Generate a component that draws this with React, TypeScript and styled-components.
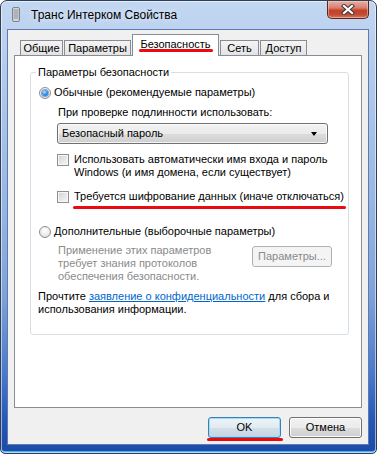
import React from 'react'
import styled, { createGlobalStyle, css } from 'styled-components'

const GlobalStyle = createGlobalStyle`
  html, body {
    margin: 0;
    padding: 0;
    background: #fff;
  }
  body {
    font-family: 'Liberation Sans', Arial, sans-serif;
    font-size: 11px;
    line-height: 13px;
    color: #000;
  }
  * {
    box-sizing: border-box;
  }
`

const Window = styled.div`
  width: 377px;
  height: 454px;
  display: flex;
  flex-direction: column;
  border: 1px solid #2f3f58;
  border-radius: 7px 7px 5px 5px;
  overflow: hidden;
  background: linear-gradient(
    to bottom,
    #c2d7f1 0%,
    #afc8ea 20%,
    #97b6e2 45%,
    #7fa3d9 65%,
    #4c7acb 82%,
    #2457b6 93%,
    #1d4aa6 100%
  );
  box-shadow: inset 0 0 0 1px rgba(255, 255, 255, 0.55), inset 0 -2px 0 #46b3f3;
`

const TitleBar = styled.div`
  height: 28px;
  display: flex;
  align-items: flex-start;
  padding-left: 11px;
  flex: none;
`

const TitleIcon = styled.svg`
  margin-top: 6px;
  flex: none;
`

const Title = styled.div`
  margin: 6px 0 0 11px;
  font-size: 12px;
  line-height: 16px;
  color: #000;
  text-shadow: 0 0 6px rgba(255, 255, 255, 0.9);
`

const CloseButton = styled.div`
  margin-left: auto;
  margin-right: 7px;
  width: 42px;
  height: 18px;
  border: 1px solid #5a251c;
  border-top: none;
  border-radius: 0 0 5px 5px;
  background: linear-gradient(
    to bottom,
    #e8b0a4 0%,
    #d98070 40%,
    #c0432c 55%,
    #c44a32 80%,
    #d97a62 100%
  );
  box-shadow: inset 0 0 0 1px rgba(255, 220, 210, 0.45);
  display: flex;
  align-items: center;
  justify-content: center;
`

const Client = styled.div`
  flex: 1;
  margin: 0 7px 8px 6px;
  background: #f0f0f0;
  border: 1px solid #5d7bae;
  display: flex;
  flex-direction: column;
  padding: 0 6px;
`

const TabsRow = styled.div`
  height: 25px;
  display: flex;
  align-items: flex-end;
  gap: 1px;
  padding-left: 6px;
  flex: none;
`

const Tab = styled.div<{ $w: number; $active?: boolean }>`
  width: ${(p) => p.$w}px;
  height: 15px;
  border: 1px solid #898c95;
  border-bottom: none;
  background: linear-gradient(to bottom, #f4f4f4 0%, #ececec 50%, #e3e3e3 100%);
  display: flex;
  align-items: center;
  justify-content: center;
  white-space: nowrap;
  ${(p) =>
    p.$active &&
    css`
      height: 22px;
      margin-bottom: -1px;
      background: #fff;
      position: relative;
      z-index: 1;
      padding-bottom: 3px;
    `}
`

const Panel = styled.div`
  flex: 1;
  background: #fff;
  border: 1px solid #898c95;
  display: flex;
  flex-direction: column;
`

const Group = styled.fieldset`
  margin: 10px 12px 0 15px;
  padding: 0 12px 18px 7px;
  border: 1px solid #d5dfe5;
  border-radius: 3px;
  min-width: 0;
  white-space: nowrap;
`

const Legend = styled.legend`
  padding: 0 2px;
  margin-left: -2px;
  line-height: 13px;
`

const OptionRow = styled.div<{ $top: number }>`
  display: flex;
  align-items: center;
  gap: 3px;
  margin-top: ${(p) => p.$top}px;
  padding-left: 1px;
`

const Radio = styled.span<{ $checked?: boolean }>`
  width: 12px;
  height: 12px;
  border-radius: 50%;
  border: 1px solid #8e8f8f;
  background: radial-gradient(circle at 50% 35%, #ffffff 0%, #ececec 55%, #cfcfcf 100%);
  display: grid;
  place-items: center;
  flex: none;
  ${(p) =>
    p.$checked &&
    css`
      &::after {
        content: '';
        width: 6px;
        height: 6px;
        border-radius: 50%;
        background: radial-gradient(circle at 40% 35%, #b8e0ff 0%, #3d95ea 45%, #0c4fae 100%);
        box-shadow: 0 0 0 1px #7aa5d8;
      }
    `}
`

const Indent = styled.div<{ $top: number }>`
  padding-left: 19px;
  margin-top: ${(p) => p.$top}px;
`

const Label = styled.div`
  padding-left: 1px;
`

const Select = styled.div`
  width: 271px;
  height: 21px;
  margin-top: 4px;
  border: 1px solid #707070;
  border-radius: 3px;
  background: linear-gradient(to bottom, #f2f2f2 0%, #ebebeb 50%, #dddddd 51%, #cfcfcf 100%);
  box-shadow: inset 0 0 0 1px rgba(255, 255, 255, 0.75);
  display: flex;
  align-items: center;
  justify-content: space-between;
  padding: 0 10px 0 4px;
`

const Arrow = styled.span`
  width: 0;
  height: 0;
  border-left: 3.5px solid transparent;
  border-right: 3.5px solid transparent;
  border-top: 4px solid #000;
`

const CheckRow = styled.div<{ $top: number }>`
  display: flex;
  align-items: flex-start;
  gap: 5px;
  margin-top: ${(p) => p.$top}px;
`

const Check = styled.span`
  width: 12px;
  height: 12px;
  margin-top: 1px;
  flex: none;
  border: 1px solid #8e8f8f;
  background: linear-gradient(135deg, #cdd0d4 0%, #e6e7e9 55%, #f7f7f7 100%);
  box-shadow: inset 0 0 0 1px #f6f6f6;
`

const Marked = styled.span<{ $drop: number }>`
  position: relative;
  display: inline-block;
  &::after {
    content: '';
    position: absolute;
    left: -1px;
    right: -2px;
    bottom: ${(p) => -p.$drop}px;
    height: 3px;
    border-radius: 2px;
    background: #ec0a12;
  }
`

const AdvancedRow = styled.div`
  display: flex;
  align-items: flex-start;
  justify-content: space-between;
  padding-right: 4px;
`

const GrayText = styled.div`
  padding-left: 1px;
  color: #8a8a8a;
`

const Button = styled.button<{ $default?: boolean; $w: number }>`
  width: ${(p) => p.$w}px;
  height: 21px;
  padding: 0;
  font-family: inherit;
  font-size: 11px;
  line-height: 13px;
  color: #000;
  border: 1px solid #707070;
  border-radius: 3px;
  background: linear-gradient(to bottom, #f2f2f2 0%, #ebebeb 50%, #dddddd 51%, #cfcfcf 100%);
  box-shadow: inset 0 0 0 1px #fbfbfb;
  flex: none;
  display: block;
  ${(p) =>
    p.$default &&
    css`
      border-color: #3c7fb1;
      background: linear-gradient(to bottom, #edf3f8 0%, #e2ebf2 50%, #d3e0ea 51%, #c4d5e2 100%);
      box-shadow: inset 0 0 0 1px #9fdcf7;
    `}
  &:disabled {
    margin-top: 2px;
    border-color: #adb2b5;
    background: #f4f4f4;
    color: #8a8a8a;
    box-shadow: none;
  }
`

const Privacy = styled.p`
  margin: 7px 0 0;
`

const Link = styled.a`
  color: #0066cc;
  text-decoration: underline;
`

const ButtonRow = styled.div`
  flex: none;
  display: flex;
  justify-content: flex-end;
  gap: 8px;
  padding: 9px 0 6px;
`

const tabs = [
  { label: 'Общие', w: 43 },
  { label: 'Параметры', w: 67 },
  { label: 'Безопасность', w: 87, active: true },
  { label: 'Сеть', w: 39 },
  { label: 'Доступ', w: 47 },
]

export default function App() {
  return (
    <>
      <GlobalStyle />
      <Window>
        <TitleBar>
          <TitleIcon width="8" height="15" viewBox="0 0 8 15">
            <rect x="0.5" y="0.5" width="7" height="14" rx="1.5" fill="#d3d7dc" stroke="#7c838c" />
            {[3, 5, 7, 9, 11].map((y) => (
              <line key={y} x1="1.5" x2="6.5" y1={y} y2={y} stroke="#8a9099" strokeWidth="1" />
            ))}
          </TitleIcon>
          <Title>Транс Интерком Свойства</Title>
          <CloseButton>
            <svg width="14" height="11" viewBox="0 0 14 11">
              <path d="M3 2 L11 9 M11 2 L3 9" stroke="#3b3b3b" strokeWidth="4.2" strokeLinecap="square" />
              <path d="M3 2 L11 9 M11 2 L3 9" stroke="#ffffff" strokeWidth="2.2" strokeLinecap="square" />
            </svg>
          </CloseButton>
        </TitleBar>
        <Client>
          <TabsRow>
            {tabs.map((t) => (
              <Tab key={t.label} $w={t.w} $active={t.active}>
                {t.active ? <Marked $drop={1}>{t.label}</Marked> : t.label}
              </Tab>
            ))}
          </TabsRow>
          <Panel>
            <Group>
              <Legend>Параметры безопасности</Legend>
              <OptionRow $top={7}>
                <Radio $checked />
                Обычные (рекомендуемые параметры)
              </OptionRow>
              <Indent $top={7}>
                <Label>При проверке подлинности использовать:</Label>
                <Select>
                  <span>Безопасный пароль</span>
                  <Arrow />
                </Select>
                <CheckRow $top={9}>
                  <Check />
                  <div>
                    Использовать автоматически имя входа и пароль
                    <br />
                    Windows (и имя домена, если существует)
                  </div>
                </CheckRow>
                <CheckRow $top={11}>
                  <Check />
                  <Marked $drop={6}>Требуется шифрование данных (иначе отключаться)</Marked>
                </CheckRow>
              </Indent>
              <OptionRow $top={22}>
                <Radio />
                Дополнительные (выборочные параметры)
              </OptionRow>
              <Indent $top={6}>
                <AdvancedRow>
                  <GrayText>
                    Применение этих параметров
                    <br />
                    требует знания протоколов
                    <br />
                    обеспечения безопасности.
                  </GrayText>
                  <Button $w={80} disabled>
                    Параметры...
                  </Button>
                </AdvancedRow>
              </Indent>
              <Privacy>
                Прочтите <Link>заявление о конфиденциальности</Link> для сбора и
                <br />
                использования информации.
              </Privacy>
            </Group>
          </Panel>
          <ButtonRow>
            <Marked $drop={3}>
              <Button $w={73} $default>
                OK
              </Button>
            </Marked>
            <Button $w={73}>Отмена</Button>
          </ButtonRow>
        </Client>
      </Window>
    </>
  )
}
